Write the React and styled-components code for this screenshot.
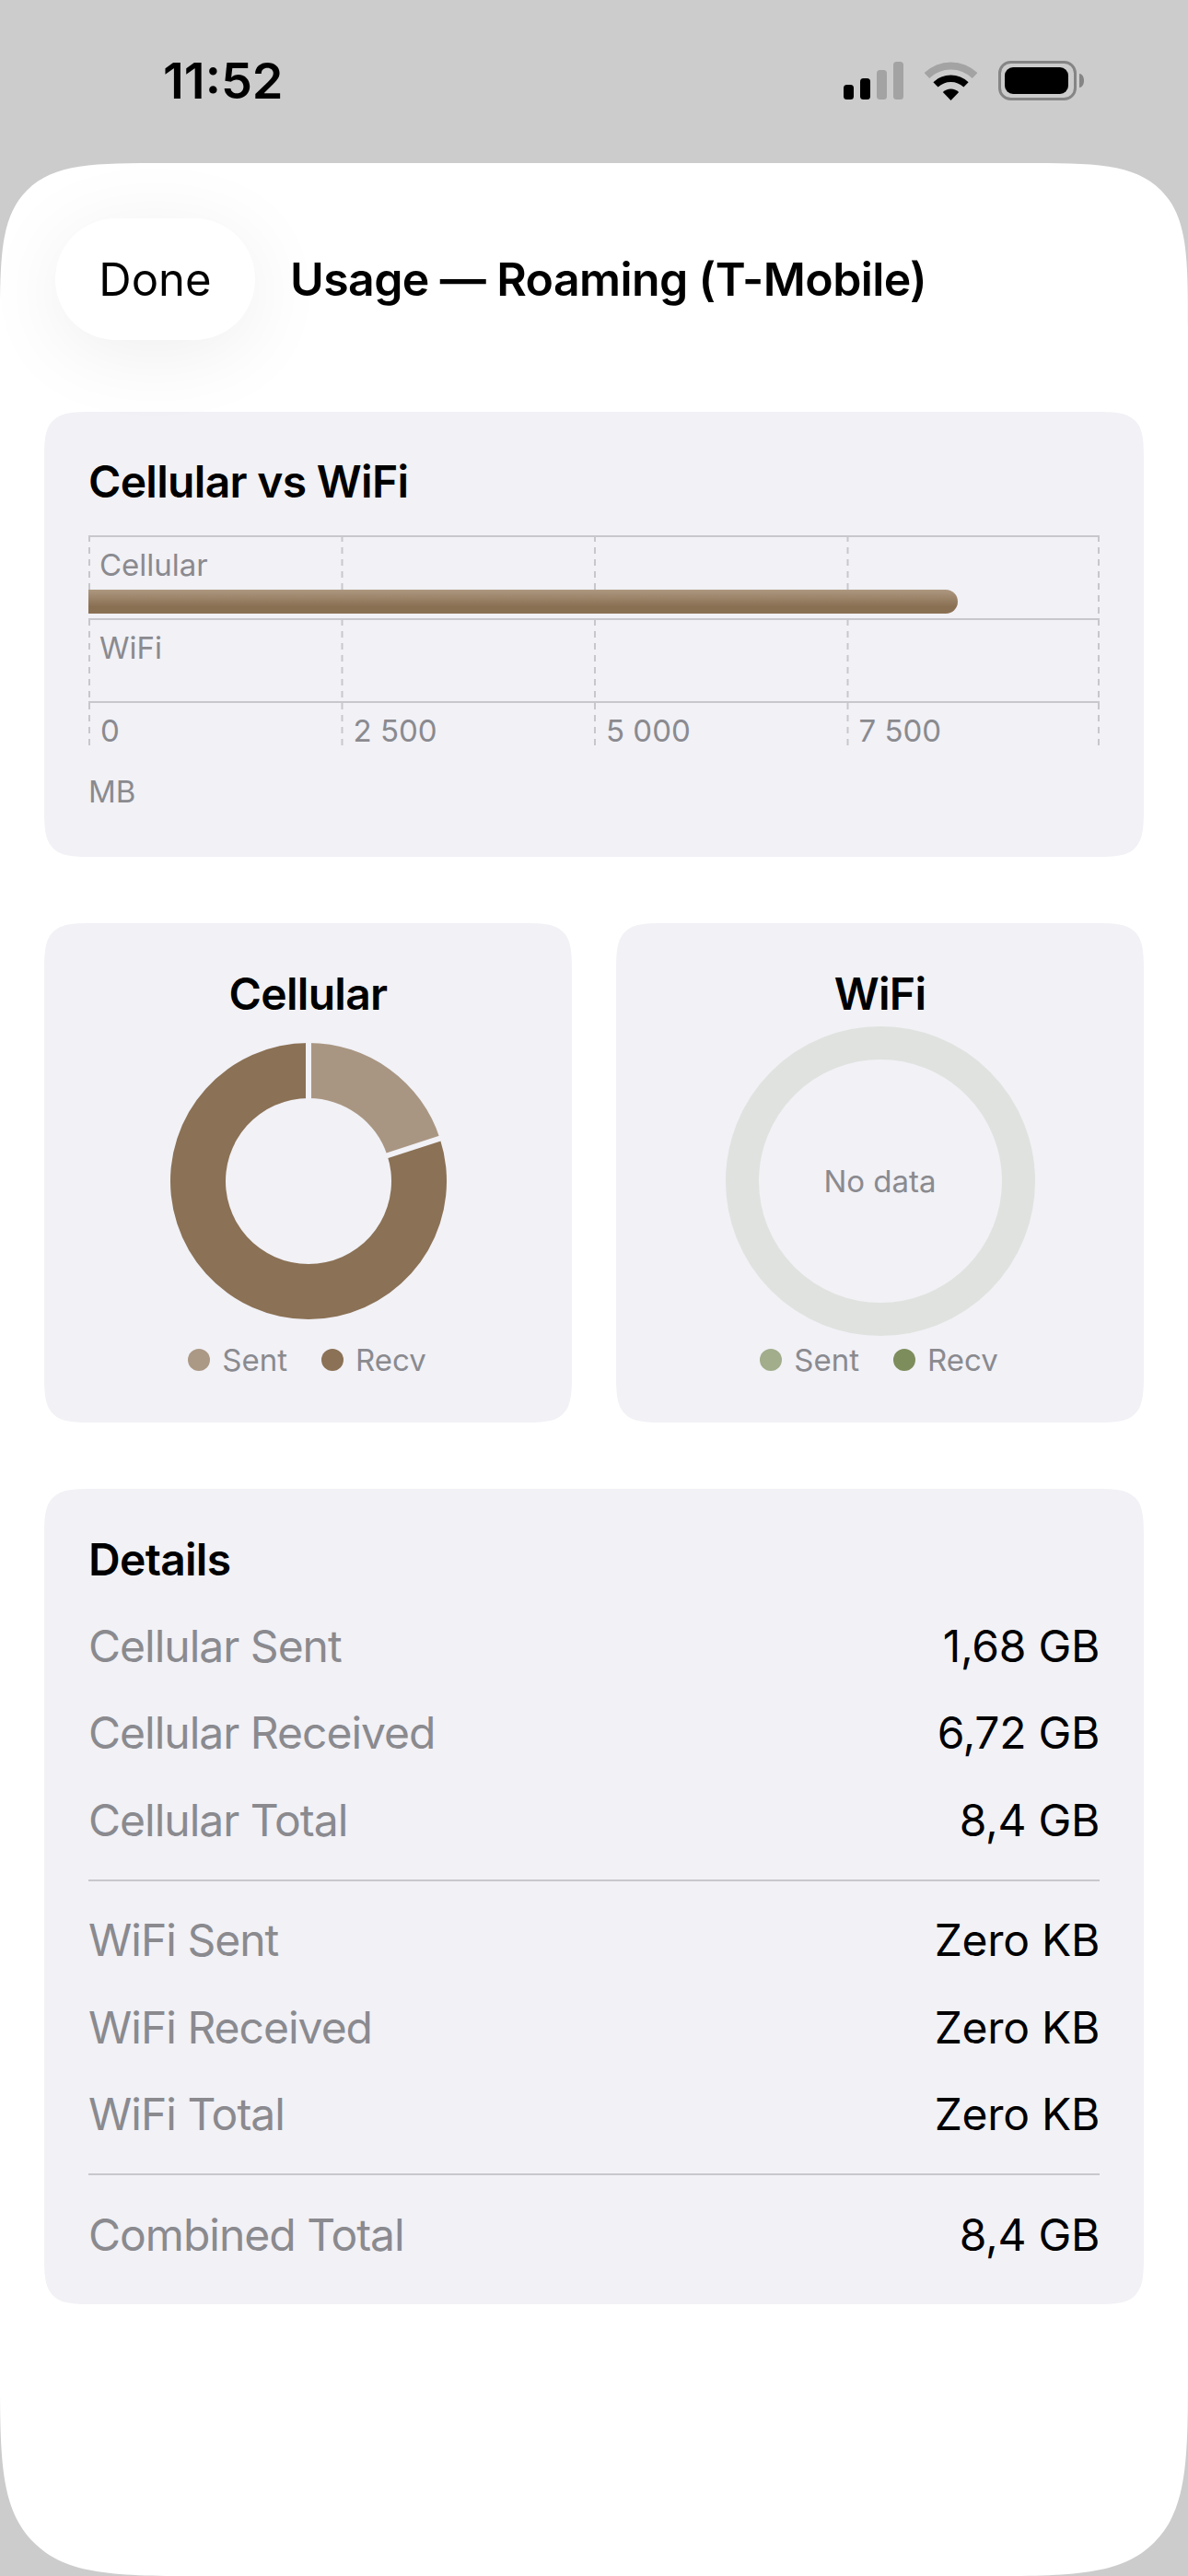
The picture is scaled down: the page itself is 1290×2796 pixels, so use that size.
import styled, { createGlobalStyle } from 'styled-components';

const CARD = '#f1f1f6';
const GRAY = '#8a8a8f';
const RULE = '#c7c7cc';

const GlobalStyle = createGlobalStyle`
  html, body {
    margin: 0;
    background: #cccccc;
    overflow: hidden;
  }
  * { box-sizing: border-box; }
`;

const Page = styled.div`
  width: 1290px;
  height: 2796px;
  display: flex;
  flex-direction: column;
  font-family: Inter, "Liberation Sans", sans-serif;
  color: #000;
`;

const StatusBar = styled.div`
  height: 177px;
  flex: none;
  display: flex;
  align-items: center;
  justify-content: space-between;
  padding: 0 113px 0 177px;
`;

const Clock = styled.div`
  font-size: 54px;
  font-weight: 600;
  margin-top: -2px;
`;

const StatusIcons = styled.div`
  display: flex;
  align-items: center;
  gap: 23px;
  margin-top: -2px;
`;

const Sheet = styled.div`
  flex: 1;
  background: #fff;
  border-radius: 185px 185px 230px 230px;
  corner-shape: squircle;
  padding-top: 60px;
  display: flex;
  flex-direction: column;
`;

const Header = styled.div`
  display: flex;
  align-items: center;
  gap: 38px;
  padding-left: 60px;
  margin-bottom: 78px;
`;

const DoneButton = styled.button`
  width: 217px;
  height: 132px;
  border: 0;
  border-radius: 66px;
  background: #fff;
  box-shadow: 0 14px 90px rgba(0, 0, 0, 0.07);
  font: 400 49px Inter, sans-serif;
  color: #000;
  position: relative;
  z-index: 1;
`;

const SheetTitle = styled.div`
  font-size: 50px;
  font-weight: 600;
  letter-spacing: -0.6px;
`;

const Content = styled.div`
  display: flex;
  flex-direction: column;
  gap: 72px;
  padding: 0 48px;
`;

const Card = styled.section`
  background: ${CARD};
  border-radius: 60px;
  corner-shape: squircle;
  padding: 48px;
`;

const CardTitle = styled.h2`
  margin: 0;
  font-size: 48px;
  font-weight: 600;
  line-height: ${p => p.$line || 56}px;
  letter-spacing: -0.7px;
  text-align: ${p => (p.$center ? 'center' : 'left')};
`;

const Plot = styled.div`
  position: relative;
  margin-top: 30px;
`;

const GridLines = styled.svg`
  position: absolute;
  left: 0;
  top: 0;
`;

const Band = styled.div`
  height: 90px;
  border-top: 2px solid ${RULE};
  padding-top: 11px;
  display: flex;
  flex-direction: column;
`;

const BandLabel = styled.div`
  padding-left: 12px;
  height: 40px;
  line-height: 38px;
  font-size: 33px;
  color: ${GRAY};
  margin-bottom: 6px;
`;

const Bar = styled.div`
  height: 26px;
  background: linear-gradient(180deg, #ad9880 0%, #8a7053 70%);
  border-radius: 0 13px 13px 0;
  position: relative;
`;

const Axis = styled.div`
  display: grid;
  grid-template-columns: repeat(4, 274.5px);
  height: 51px;
  border-top: 2px solid ${RULE};
  padding-top: 10px;
`;

const Tick = styled.div`
  padding-left: 13px;
  font-size: 33px;
  line-height: 40px;
  color: ${GRAY};
`;

const Unit = styled.div`
  margin-top: 27px;
  margin-bottom: 3px;
  font-size: 33px;
  line-height: 40px;
  color: ${GRAY};
`;

const PieRow = styled.div`
  display: grid;
  grid-template-columns: 1fr 1fr;
  gap: 48px;
`;

const Ring = styled.div`
  position: relative;
  height: 348px;
  margin: 0 -48px;
  display: flex;
  align-items: center;
  justify-content: center;
`;

const RingNote = styled.div`
  position: absolute;
  font-size: 33px;
  color: ${GRAY};
`;

const Legend = styled.div`
  display: flex;
  justify-content: center;
  gap: 37px;
  padding-right: 2px;
  font-size: 33px;
  line-height: 40px;
  color: ${GRAY};
`;

const LegendItem = styled.div`
  display: flex;
  align-items: center;
  gap: 13px;
`;

const Dot = styled.span`
  width: 24px;
  height: 24px;
  border-radius: 50%;
  background: ${p => p.$color};
`;

const DetailList = styled.div`
  margin-top: 17px;
  margin-bottom: -20px;
`;

const Row = styled.div`
  height: 94.5px;
  display: flex;
  align-items: center;
  justify-content: space-between;
  font-size: 48px;
`;

const RowLabel = styled.span`
  color: ${GRAY};
  letter-spacing: -1px;
`;

const RowValue = styled.span`
  letter-spacing: -0.3px;
`;

const Divider = styled.hr`
  margin: 17px 0;
  border: 0;
  height: 2px;
  background: ${RULE};
`;

// angles in degrees, clockwise from twelve o'clock
const polar = (cx, cy, r, deg) => {
  const a = (deg * Math.PI) / 180;
  return [cx + r * Math.sin(a), cy - r * Math.cos(a)];
};

const sector = (cx, cy, outer, inner, from, to) => {
  const [x1, y1] = polar(cx, cy, outer, from);
  const [x2, y2] = polar(cx, cy, outer, to);
  const large = to - from > 180 ? 1 : 0;
  if (inner === 0) {
    return `M${cx} ${cy}L${x1} ${y1}A${outer} ${outer} 0 ${large} 1 ${x2} ${y2}Z`;
  }
  const [x3, y3] = polar(cx, cy, inner, to);
  const [x4, y4] = polar(cx, cy, inner, from);
  return `M${x1} ${y1}A${outer} ${outer} 0 ${large} 1 ${x2} ${y2}L${x3} ${y3}A${inner} ${inner} 0 ${large} 0 ${x4} ${y4}Z`;
};

const SignalIcon = () => (
  <svg width="65" height="41" viewBox="0 0 65 41">
    <rect x="0" y="25" width="11" height="16" rx="3.5" fill="#000" />
    <rect x="18" y="18" width="11" height="23" rx="3.5" fill="#000" />
    <rect x="36" y="9" width="11" height="32" rx="3.5" fill="#a3a3a3" />
    <rect x="54" y="0" width="11" height="41" rx="3.5" fill="#a3a3a3" />
  </svg>
);

const WifiIcon = () => (
  <svg width="57" height="42" viewBox="0 0 57 42">
    <path d={sector(28.5, 42, 41.5, 33.5, -44, 44)} fill="#a3a3a3" />
    <path d={sector(28.5, 42, 27.5, 20, -44, 44)} fill="#000" />
    <path d={sector(28.5, 42, 12.5, 0, -44, 44)} fill="#000" />
  </svg>
);

const BatteryIcon = () => (
  <svg width="93" height="43" viewBox="0 0 93 43">
    <rect x="1.5" y="1.5" width="82" height="40" rx="12" fill="none" stroke="#858585" strokeWidth="3" />
    <rect x="7" y="7" width="69" height="29" rx="9" fill="#000" />
    <path d="M88 14a5 7 0 0 1 5 7.5a5 7 0 0 1-5 7.5z" fill="#858585" />
  </svg>
);

const PLOT_W = 1098;
const PLOT_H = 231;
const MB_MAX = 10000;
const cellularMb = 8.4 * 1024;

const Grid = () => (
  <GridLines width={PLOT_W} height={PLOT_H}>
    {[0, 1, 2, 3, 4].map(i => {
      const x = Math.min(1 + i * 274.5, PLOT_W - 1);
      return (
        <line key={i} x1={x} x2={x} y1="0" y2={PLOT_H} stroke={RULE} strokeWidth="2" strokeDasharray="7 6" />
      );
    })}
  </GridLines>
);

const CellularRing = () => (
  <svg width="300" height="300" viewBox="0 0 300 300">
    <path d={sector(150, 150, 150, 90, 0, 72)} fill="#a99682" />
    <path d={sector(150, 150, 150, 90, 72, 360)} fill="#8b7155" />
    {[0, 72].map(deg => {
      const [x1, y1] = polar(150, 150, 85, deg);
      const [x2, y2] = polar(150, 150, 155, deg);
      return <line key={deg} x1={x1} y1={y1} x2={x2} y2={y2} stroke={CARD} strokeWidth="6" />;
    })}
  </svg>
);

const EmptyRing = () => (
  <svg width="336" height="336" viewBox="0 0 336 336">
    <circle cx="168" cy="168" r="150" fill="none" stroke="#e0e2df" strokeWidth="36" />
  </svg>
);

const PieLegend = ({ sent, recv }) => (
  <Legend>
    <LegendItem><Dot $color={sent} />Sent</LegendItem>
    <LegendItem><Dot $color={recv} />Recv</LegendItem>
  </Legend>
);

const DETAILS = [
  [
    ['Cellular Sent', '1,68 GB'],
    ['Cellular Received', '6,72 GB'],
    ['Cellular Total', '8,4 GB'],
  ],
  [
    ['WiFi Sent', 'Zero KB'],
    ['WiFi Received', 'Zero KB'],
    ['WiFi Total', 'Zero KB'],
  ],
  [['Combined Total', '8,4 GB']],
];

export default function App() {
  return (
    <Page>
      <GlobalStyle />
      <StatusBar>
        <Clock>11:52</Clock>
        <StatusIcons>
          <SignalIcon />
          <WifiIcon />
          <BatteryIcon />
        </StatusIcons>
      </StatusBar>
      <Sheet>
        <Header>
          <DoneButton>Done</DoneButton>
          <SheetTitle>Usage — Roaming (T-Mobile)</SheetTitle>
        </Header>
        <Content>
          <Card>
            <CardTitle>Cellular vs WiFi</CardTitle>
            <Plot>
              <Grid />
              <Band>
                <BandLabel>Cellular</BandLabel>
                <Bar style={{ width: (cellularMb / MB_MAX) * PLOT_W }} />
              </Band>
              <Band>
                <BandLabel>WiFi</BandLabel>
              </Band>
              <Axis>
                <Tick>0</Tick>
                <Tick>2 500</Tick>
                <Tick>5 000</Tick>
                <Tick>7 500</Tick>
              </Axis>
            </Plot>
            <Unit>MB</Unit>
          </Card>
          <PieRow>
            <Card>
              <CardTitle $center $line={58}>Cellular</CardTitle>
              <Ring><CellularRing /></Ring>
              <PieLegend sent="#ab9985" recv="#8b7155" />
            </Card>
            <Card>
              <CardTitle $center $line={58}>WiFi</CardTitle>
              <Ring>
                <EmptyRing />
                <RingNote>No data</RingNote>
              </Ring>
              <PieLegend sent="#a1ad8b" recv="#7d8d5c" />
            </Card>
          </PieRow>
          <Card>
            <CardTitle $line={58}>Details</CardTitle>
            <DetailList>
              {DETAILS.map((group, i) => (
                <div key={i}>
                  {i > 0 && <Divider />}
                  {group.map(([label, value]) => (
                    <Row key={label}>
                      <RowLabel>{label}</RowLabel>
                      <RowValue>{value}</RowValue>
                    </Row>
                  ))}
                </div>
              ))}
            </DetailList>
          </Card>
        </Content>
      </Sheet>
    </Page>
  );
}
